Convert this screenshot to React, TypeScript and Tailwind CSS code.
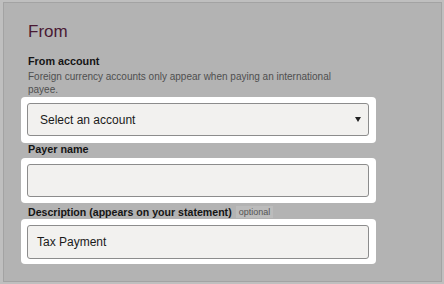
import React from "react";

function Highlight({ children, pb = "pb-[6px]" }: { children: React.ReactNode; pb?: string }) {
  return (
    <div className={`ml-[-7px] w-[355px] rounded-[4px] bg-white px-[6px] pt-[6px] ${pb}`}>{children}</div>
  );
}

export default function App() {
  return (
    <div
      className="h-[284px] w-[444px] overflow-hidden bg-[#bfbfbf] pl-[3px] pt-[2px]"
      style={{ fontFamily: '"Liberation Sans", Arial, sans-serif' }}
    >
      <div className="h-[280px] w-[439px] border border-[#a3a3a3] bg-[#b3b3b3] pl-[24px] pt-[18px]">
        <h2 className="text-[17px] leading-[22px] text-[#4a1a33]">From</h2>
        <div className="mt-[11px] text-[10.8px] font-bold leading-[14px] text-[#151515]">From account</div>
        <p className="mt-[2px] w-[312px] text-[10px] leading-[13px] text-[#4f4f4f]">
          Foreign currency accounts only appear when paying an international payee.
        </p>
        <div className="mt-[1px]">
          <Highlight pb="pb-[7px]">
            <div className="flex h-[33px] w-[342px] items-center justify-between rounded-[3px] border border-[#8c8c8c] bg-[#f2f1ef] pl-[12px] pr-[7px] text-[12px] text-[#1a1a1a]">
              <span>Select an account</span>
              <svg width="6" height="5" viewBox="0 0 6 5">
                <path d="M0 0 L6 0 L3 5 Z" fill="#222" />
              </svg>
            </div>
          </Highlight>
        </div>
        <div className="text-[10.8px] font-bold leading-[12px] text-[#151515]">Payer name</div>
        <div className="mt-[3px]">
          <Highlight>
            <div className="h-[33px] w-[342px] rounded-[3px] border border-[#8c8c8c] bg-[#f2f1ef]" />
          </Highlight>
        </div>
        <div className="mt-[3px] flex h-[12px] items-center text-[10.6px] font-bold leading-[12px] text-[#151515]">
          <span>Description (appears on your statement)</span>
          <span className="ml-[4px] bg-[#bcbcbc] px-[3px] text-[9px] font-normal leading-[12px] text-[#555]">
            optional
          </span>
        </div>
        <div className="mt-[1px]">
          <Highlight pb="pb-[5px]">
            <div className="flex h-[34px] w-[342px] items-center rounded-[3px] border border-[#8c8c8c] bg-[#f2f1ef] pl-[9px] text-[12px] text-[#1a1a1a]">
              Tax Payment
            </div>
          </Highlight>
        </div>
      </div>
    </div>
  );
}
